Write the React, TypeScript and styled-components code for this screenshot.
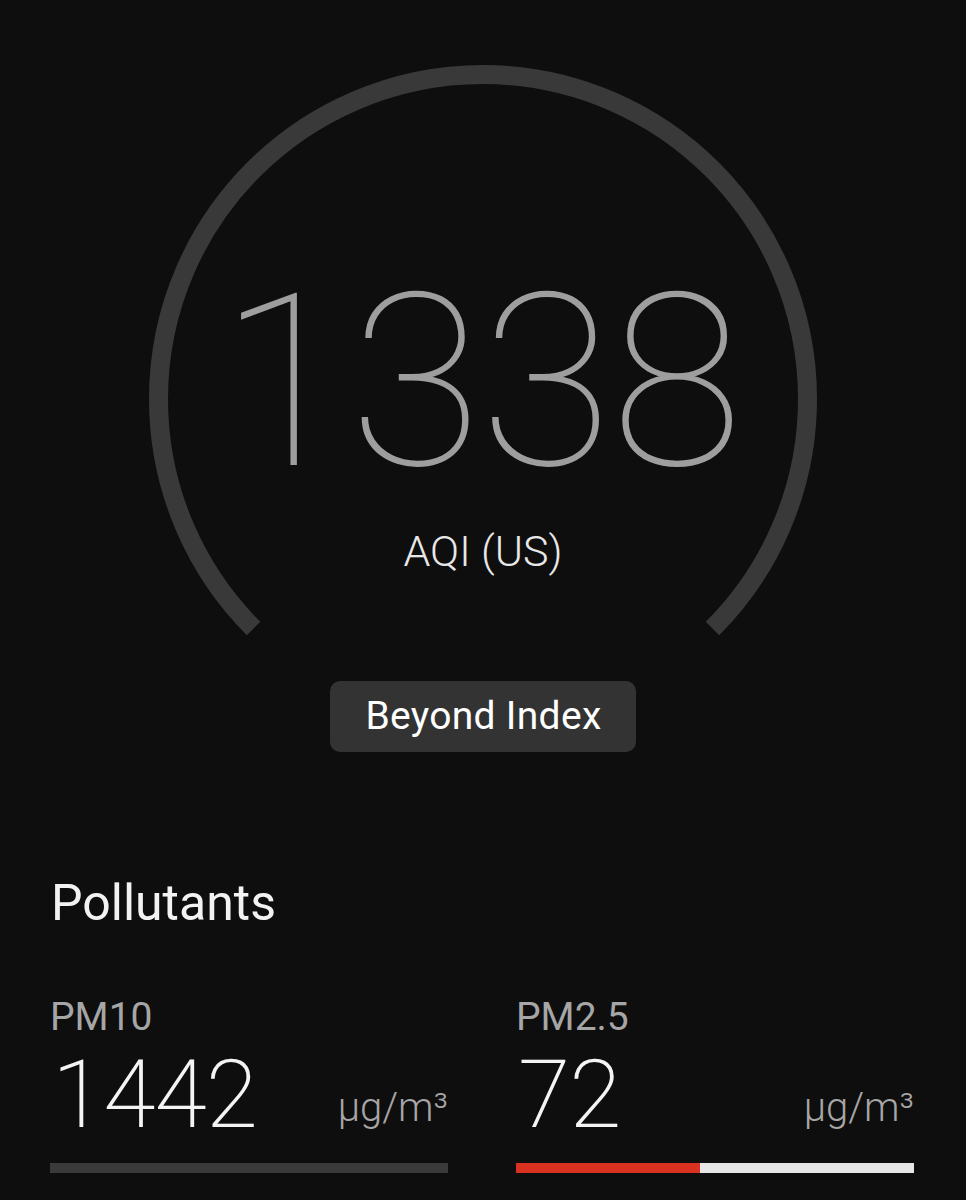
import React from "react";
import styled, { createGlobalStyle } from "styled-components";

const GlobalStyle = createGlobalStyle`
  html, body {
    margin: 0;
    padding: 0;
    background: #0e0e0e;
  }
  body {
    font-family: Roboto, "Noto Sans", "Liberation Sans", sans-serif;
    color: #f2f2f2;
  }
`;

const Page = styled.main`
  width: 966px;
  min-height: 1200px;
  background: #0e0e0e;
  display: flex;
  flex-direction: column;
  align-items: stretch;
  padding: 65px 52px 0 50px;
  box-sizing: border-box;
`;

const Gauge = styled.section`
  display: grid;
  justify-items: center;
  align-self: center;
  width: 668px;
  margin-left: 2px;
`;

const Ring = styled.svg`
  grid-area: 1 / 1;
  width: 668px;
  height: 668px;
  display: block;
`;

const GaugeContent = styled.div`
  grid-area: 1 / 1;
  display: flex;
  flex-direction: column;
  align-items: center;
  padding-top: 196px;
`;

const BigValue = styled.div`
  font-size: 242px;
  line-height: 1;
  font-weight: 100;
  color: #9e9e9e;
  letter-spacing: -2px;
  margin-left: -6px;
`;

const Scale = styled.div`
  margin-top: 27px;
  font-size: 43px;
  line-height: 1;
  font-weight: 300;
  color: #e8e8e8;
`;

const Badge = styled.div`
  margin-top: 108px;
  background: #333333;
  border-radius: 10px;
  padding: 16px 34px 16px 35px;
  font-size: 39px;
  line-height: 1;
  font-weight: 400;
  color: #ffffff;
  letter-spacing: 0.3px;
`;

const Heading = styled.h2`
  margin: 126px 0 0 1px;
  font-size: 50px;
  line-height: 1;
  font-weight: 400;
  color: #f2f2f2;
`;

const Grid = styled.div`
  display: grid;
  grid-template-columns: 398px 398px;
  column-gap: 68px;
  margin-top: 70px;
`;

const Item = styled.div`
  display: flex;
  flex-direction: column;
`;

const Label = styled.div`
  font-size: 39px;
  line-height: 1;
  font-weight: 400;
  color: #a6a6a6;
`;

const ValueRow = styled.div`
  display: flex;
  justify-content: space-between;
  align-items: flex-end;
  margin-top: 10px;
`;

const Value = styled.div`
  font-size: 95px;
  line-height: 1;
  font-weight: 200;
  color: #f4f4f4;
  letter-spacing: -1px;
  margin-left: 2px;
`;

const Unit = styled.div`
  font-size: 40px;
  line-height: 1;
  font-weight: 300;
  color: #a6a6a6;
  margin-bottom: 14px;
`;

const Bar = styled.div<{ $track: string }>`
  margin-top: 21px;
  height: 10px;
  background: ${(p) => p.$track};
  display: flex;
`;

const Fill = styled.div<{ $color: string }>`
  height: 100%;
  background: ${(p) => p.$color};
`;

const pollutants = [
  { name: "PM10", value: "1442", track: "#3a3a3a", fill: 0, color: "#d93220" },
  { name: "PM2.5", value: "72", track: "#e6e6e6", fill: 46.2, color: "#d93220" },
];

const R = 324.5;
const C = 334;
const pt = (deg: number) => {
  const a = (deg * Math.PI) / 180;
  return [C + R * Math.sin(a), C - R * Math.cos(a)];
};
const [sx, sy] = pt(225);
const [ex, ey] = pt(135);
const arcPath = `M ${sx} ${sy} A ${R} ${R} 0 1 1 ${ex} ${ey}`;

export default function App() {
  return (
    <>
      <GlobalStyle />
      <Page>
        <Gauge>
          <Ring viewBox="0 0 668 668">
            <path d={arcPath} fill="none" stroke="#393939" strokeWidth={19} strokeLinecap="butt" />
          </Ring>
          <GaugeContent>
            <BigValue>1338</BigValue>
            <Scale>AQI (US)</Scale>
            <Badge>Beyond Index</Badge>
          </GaugeContent>
        </Gauge>
        <Heading>Pollutants</Heading>
        <Grid>
          {pollutants.map((p) => (
            <Item key={p.name}>
              <Label>{p.name}</Label>
              <ValueRow>
                <Value>{p.value}</Value>
                <Unit>µg/m³</Unit>
              </ValueRow>
              <Bar $track={p.track}>
                <Fill $color={p.color} style={{ width: `${p.fill}%` }} />
              </Bar>
            </Item>
          ))}
        </Grid>
      </Page>
    </>
  );
}
